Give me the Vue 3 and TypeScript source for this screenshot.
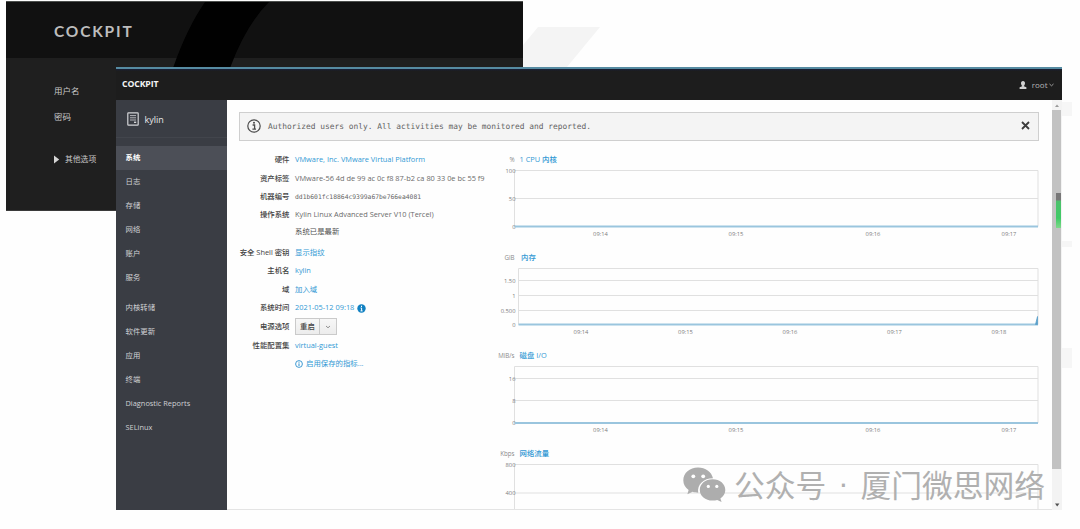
<script setup lang="ts">
interface Tick { y: number; label: string }
interface TimeTick { x: number; label: string }
interface Chart {
  unit: string
  title: string
  left: number
  bottom: number
  ticks: Tick[]
  times: TimeTick[]
  timeY: number
  baseline: boolean
  spike: boolean
}
interface Row { label: string; value: string; kind: string; height: number }

const wideTimes: TimeTick[] = [
  { x: 110.5, label: '09:14' },
  { x: 246, label: '09:15' },
  { x: 383, label: '09:16' },
  { x: 519, label: '09:17' },
]

const charts: Chart[] = [
  { unit: '%', title: '1 CPU 内核', left: 24.5, bottom: 57.5, ticks: [{ y: 1.5, label: '100' }, { y: 29.5, label: '50' }, { y: 57.5, label: '0' }], times: wideTimes, timeY: 67, baseline: true, spike: false },
  {
    unit: 'GiB', title: '内存', left: 28.5, bottom: 57.5,
    ticks: [{ y: 13.5, label: '1.50' }, { y: 28.5, label: '1' }, { y: 43.5, label: '0.500' }, { y: 57.5, label: '0' }],
    times: [{ x: 91, label: '09:14' }, { x: 195.5, label: '09:15' }, { x: 300, label: '09:16' }, { x: 404.5, label: '09:17' }, { x: 509, label: '09:18' }],
    timeY: 66.5, baseline: true, spike: true,
  },
  { unit: 'MiB/s', title: '磁盘 I/O', left: 24.5, bottom: 58, ticks: [{ y: 13.5, label: '16' }, { y: 35.5, label: '8' }, { y: 58, label: '0' }], times: wideTimes, timeY: 67, baseline: true, spike: false },
  { unit: 'Kbps', title: '网络流量', left: 24.5, bottom: 80, ticks: [{ y: 1.5, label: '800' }, { y: 30, label: '400' }], times: [], timeY: 67, baseline: false, spike: false },
]

const navTop = ['系统', '日志', '存储', '网络', '账户', '服务']
const navBottom = ['内核转储', '软件更新', '应用', '终端', 'Diagnostic Reports', 'SELinux']

const rows: Row[] = [
  { label: '硬件', value: 'VMware, Inc. VMware Virtual Platform', kind: 'link', height: 18 },
  { label: '资产标签', value: 'VMware-56 4d de 99 ac 0c f8 87-b2 ca 80 33 0e bc 55 f9', kind: 'text', height: 19 },
  { label: '机器编号', value: 'dd1b601fc18864c9399a67be766ea4081', kind: 'mono', height: 18 },
  { label: '操作系统', value: 'Kylin Linux Advanced Server V10 (Tercel)', kind: 'text', height: 18 },
  { label: '', value: '系统已是最新', kind: 'dark', height: 16 },
  { label: '安全 Shell 密钥', value: '显示指纹', kind: 'link', height: 25 },
  { label: '主机名', value: 'kylin', kind: 'link', height: 12 },
  { label: '域', value: '加入域', kind: 'link', height: 25 },
  { label: '系统时间', value: '2021-05-12 09:18', kind: 'time', height: 12 },
  { label: '电源选项', value: '重启', kind: 'button', height: 25 },
  { label: '性能配置集', value: 'virtual-guest', kind: 'link', height: 13 },
  { label: '', value: '启用保存的指标...', kind: 'metrics', height: 23 },
]
</script>

<template>
  <div class="stage">
    <svg class="backdrop" width="1080" height="529" viewBox="0 0 1080 529">
      <path d="M538 27H600L567 67H505Z" fill="#f4f4f4" />
      <path d="M1062 102h10v14h-10zM1062 241h10v6h-10zM1062 348h10v20h-10z" fill="#f6f6f6" />
    </svg>

    <section class="login">
      <header class="login-head">
        <svg class="band" width="516" height="66" viewBox="0 0 516 66">
          <path d="M199 0H263Q240 23 224 66H167Q181 26 199 0Z" fill="#010101" />
        </svg>
        <span class="login-logo">COCKPIT</span>
      </header>
      <div class="login-body">
        <span class="field user">用户名</span>
        <span class="field pass">密码</span>
        <span class="field more">
          <svg width="6" height="9" viewBox="0 0 6 9"><path d="M0 0.5L5.2 4.5L0 8.5Z" fill="#d5d5d5" /></svg>
          其他选项
        </span>
      </div>
    </section>

    <section class="window">
      <header class="topbar">
        <span class="brand">COCKPIT</span>
        <span class="account">
          <svg width="8" height="8" viewBox="0 0 8 8"><path d="M4 0C5.4 0 6 1 6 2.2C6 3.4 5.4 4.4 4.9 4.7V5.2L7.4 6.2V8H0.6V6.2L3.1 5.2V4.7C2.6 4.4 2 3.4 2 2.2C2 1 2.6 0 4 0Z" fill="#d0d0d0" /></svg>
          <span>root</span>
          <svg class="caret" width="5" height="4" viewBox="0 0 5 4"><path d="M0.5 1L2.5 2.8L4.5 1" fill="none" stroke="#aaa" stroke-width="0.9" /></svg>
        </span>
      </header>

      <div class="body">
        <nav class="sidebar">
          <div class="host">
            <svg width="12" height="14" viewBox="0 0 12 14">
              <rect x="0.8" y="0.8" width="10.4" height="12.4" rx="0.6" fill="none" stroke="#d2d3d6" stroke-width="1.2" />
              <path d="M3 3.6H9M3 5.8H9M3 8H9" stroke="#c2c3c7" stroke-width="0.9" />
              <path d="M7 10.3H9.2" stroke="#d2d3d6" stroke-width="1.4" />
            </svg>
            <span>kylin</span>
          </div>
          <ul class="nav">
            <li v-for="(item, i) in navTop" :key="item" :class="{ active: i === 0 }">{{ item }}</li>
          </ul>
          <ul class="nav second">
            <li v-for="item in navBottom" :key="item">{{ item }}</li>
          </ul>
        </nav>

        <main class="content">
          <div class="alert">
            <svg width="14" height="14" viewBox="0 0 14 14">
              <circle cx="7" cy="7" r="6.2" fill="none" stroke="#4b4b4b" stroke-width="1.2" />
              <path d="M5.6 6H7.6V10M5.4 10.2H9" fill="none" stroke="#4b4b4b" stroke-width="1.3" />
              <circle cx="7" cy="3.8" r="1" fill="#4b4b4b" />
            </svg>
            <span class="alert-text">Authorized users only. All activities may be monitored and reported.</span>
            <svg class="close" width="9" height="9" viewBox="0 0 9 9"><path d="M1 1L8 8M8 1L1 8" stroke="#3c3c3c" stroke-width="1.8" /></svg>
          </div>

          <div class="columns">
            <div class="info">
              <div v-for="row in rows" :key="row.value" class="row" :style="{ height: row.height + 'px' }">
                <span class="label">{{ row.label }}</span>
                <span v-if="row.kind === 'button'" class="button">
                  <span class="button-main">{{ row.value }}</span>
                  <span class="button-drop">
                    <svg width="6" height="4" viewBox="0 0 6 4"><path d="M1 1L3 2.8L5 1" fill="none" stroke="#777" stroke-width="0.8" /></svg>
                  </span>
                </span>
                <span v-else class="value" :class="row.kind">
                  <svg v-if="row.kind === 'metrics'" width="8" height="8" viewBox="0 0 8 8">
                    <circle cx="4" cy="4" r="3.4" fill="none" stroke="#2b8fce" stroke-width="0.9" />
                    <path d="M4 1.8V2.7M4 3.4V6" stroke="#2b8fce" stroke-width="1" />
                  </svg>
                  <span>{{ row.value }}</span>
                  <svg v-if="row.kind === 'time'" width="9" height="9" viewBox="0 0 9 9">
                    <circle cx="4.5" cy="4.5" r="4.2" fill="#1181c2" />
                    <path d="M4.5 1.7V3M3.6 4H4.6V6.8M3.5 6.9H5.6" fill="none" stroke="#fff" stroke-width="1" />
                  </svg>
                </span>
              </div>
            </div>

            <div class="charts">
              <div v-for="c in charts" :key="c.title" class="chart">
                <div class="chart-head">
                  <span class="unit">{{ c.unit }}</span>
                  <span class="chart-title" :class="{ inset: c.spike }">{{ c.title }}</span>
                </div>
                <svg class="plot" width="560" height="80" viewBox="0 0 560 80">
                  <path :d="`M${c.left} ${c.bottom}V1.5H548V${c.bottom}`" fill="none" stroke="#e0e0e0" stroke-width="1" />
                  <template v-for="t in c.ticks" :key="t.label">
                    <line :x1="c.left" :x2="548" :y1="t.y" :y2="t.y" stroke="#e0e0e0" stroke-width="1" />
                    <text x="25.5" :y="t.y + 2.1" text-anchor="end" class="tick">{{ t.label }}</text>
                  </template>
                  <line v-if="c.baseline" :x1="c.left" x2="548" :y1="c.bottom" :y2="c.bottom" stroke="#9ac5de" stroke-width="2" />
                  <path v-if="c.spike" d="M545.5 57.5L547.5 49.5V57.5Z" fill="#5a9fca" stroke="#5a9fca" stroke-width="0.8" />
                  <text v-for="t in c.times" :key="t.label" :x="t.x" :y="c.timeY" text-anchor="middle" class="tick">{{ t.label }}</text>
                </svg>
              </div>
            </div>
          </div>
        </main>

        <div class="scroll">
          <svg width="10" height="10" viewBox="0 0 10 10"><path d="M3 7L5 4.5L7 7Z" fill="#999" /></svg>
          <div class="thumb"></div>
          <div class="rest"></div>
          <svg width="10" height="10" viewBox="0 0 10 10"><path d="M3 3.5H7.4L5.2 6.4Z" fill="#505050" /></svg>
          <div class="meter"></div>
        </div>
      </div>
    </section>

    <div class="watermark">
      <svg width="43" height="36" viewBox="0 0 43 36">
        <path d="M15 0.5C6.6 0.5 0.3 6.2 0.3 13.2C0.3 17.2 2.3 20.6 5.6 23L4.4 27.2L9.6 24.8C11.4 25.4 13 25.7 15.2 25.7C14 17.5 20.5 11.2 30 11.2C28.5 4.8 22.5 0.5 15 0.5Z" fill="#adadad" />
        <path d="M29.6 12.3C22.3 12.3 16.8 17 16.8 23C16.8 29 22.3 33.6 29.6 33.6C31.2 33.6 32.8 33.3 34.2 32.9L38.6 35L37.4 31.4C40.4 29.4 42.3 26.4 42.3 23C42.3 17 36.8 12.3 29.6 12.3Z" fill="#adadad" />
        <g fill="#fff">
          <circle cx="10.3" cy="9.3" r="1.9" /><circle cx="20.2" cy="9.3" r="1.9" />
          <circle cx="25.3" cy="19.4" r="1.6" /><circle cx="33.8" cy="19.4" r="1.6" />
        </g>
      </svg>
      <span class="account-kind">公众号</span>
      <span class="dot">·</span>
      <span class="account-name">厦门微思网络</span>
    </div>
  </div>
</template>

<style>
html, body { margin: 0; background: #fefefe; overflow: hidden; }
</style>

<style scoped>
.stage {
  position: relative;
  width: 1080px;
  height: 529px;
  overflow: hidden;
  background: #fefefe;
  font-family: "Open Sans", "Noto Sans CJK SC", sans-serif;
  font-size: 7.4px;
  line-height: 1;
  white-space: nowrap;
}
.backdrop { position: absolute; left: 0; top: 0; }
svg { display: block; flex: none; }

.login {
  position: absolute;
  left: 6px;
  top: 1px;
  width: 516.5px;
  height: 209.5px;
  background: #1f1f1f;
  border-top: 1px solid #4c4f4d;
  box-sizing: border-box;
  border-bottom: 1px solid #3b3b3b;
}
.login-head {
  display: flex;
  align-items: center;
  height: 56px;
  padding-left: 48px;
  background: #111;
}
.band { position: absolute; left: 0; top: 0; }
.login-logo {
  position: relative;
  top: 2px;
  color: #bdbdbd;
  font-family: Lato, sans-serif;
  font-size: 15.5px;
  font-weight: 700;
  letter-spacing: 1.8px;
}
.login-body { display: flex; flex-direction: column; padding-left: 48px; color: #c9c9c9; }
.field { font-size: 8.5px; height: 10px; line-height: 10px; }
.user { margin-top: 28px; }
.pass { margin-top: 16px; }
.more { margin-top: 32px; display: flex; align-items: center; gap: 5px; font-size: 7.8px; }

.window {
  position: absolute;
  left: 116px;
  top: 67px;
  width: 946px;
  height: 443px;
  display: flex;
  flex-direction: column;
  background: #fefefe;
}
.topbar {
  flex: none;
  height: 33px;
  box-sizing: border-box;
  border-top: 2px solid #568ba2;
  background: linear-gradient(#18203a 0, #1d1d1d 2px);
  display: flex;
  align-items: center;
  justify-content: space-between;
  padding: 0 8px 0 6px;
}
.brand { color: #f4f4f4; font-size: 8.7px; font-weight: 700; letter-spacing: -0.1px; }
.account { display: flex; align-items: center; color: #b5b5b5; font-size: 8px; }
.account span { margin: 0 1.5px 0 5px; }
.body { flex: 1; display: flex; min-height: 0; }

.sidebar { width: 110.5px; flex: none; background: #3a3d44; color: #d0d1d4; }
.host {
  height: 38px;
  padding: 1px 0 0 11px;
  box-sizing: border-box;
  display: flex;
  align-items: center;
  gap: 5.5px;
  font-size: 9px;
  color: #e8e8ea;
  border-bottom: 1px solid #42454c;
}
.nav { list-style: none; margin: 8px 0 0; padding: 0; }
.nav.second { margin-top: 6.5px; }
.nav li { height: 23.95px; display: flex; align-items: center; padding-left: 9.5px; }
.nav li.active { background: #4c4f57; color: #fff; font-weight: 700; }

.content { flex: 1; min-width: 0; overflow: hidden; border-bottom: 1px solid #e4e4e4; }
.alert {
  margin: 12px 0 0 12.5px;
  width: 800px;
  height: 29px;
  box-sizing: border-box;
  border: 1px solid #cfcfcf;
  background: #f4f4f4;
  display: flex;
  align-items: center;
  padding: 0 8px 2px 7px;
}
.alert-text {
  margin: 3px 0 0 7px;
  font-family: "DejaVu Sans Mono", monospace;
  font-size: 7.9px;
  color: #626262;
}
.close { margin-left: auto; }
.columns { display: flex; margin-top: 10px; }
.info { width: 263.5px; flex: none; color: #6b6b6b; }
.row { display: flex; align-items: center; }
.label { width: 63px; text-align: right; color: #444; font-weight: 500; margin-right: 5.5px; }
.value { display: flex; align-items: center; gap: 3px; }
.link, .time, .metrics { color: #3299d4; }
.dark { color: #505050; }
.mono { font-family: "DejaVu Sans Mono", monospace; font-size: 6.35px; color: #666; }
.button {
  display: flex;
  width: 42px;
  height: 17px;
  box-sizing: border-box;
  border: 1px solid #cacaca;
  background: linear-gradient(#f7f7f7, #ececec);
  color: #444;
}
.button-main { width: 23px; display: flex; align-items: center; justify-content: center; border-right: 1px solid #cacaca; font-weight: 500; }
.button-drop { flex: 1; display: flex; align-items: center; justify-content: center; }

.charts { width: 560px; flex: none; }
.chart { height: 98px; }
.chart-head { height: 18px; display: flex; align-items: center; }
.plot { overflow: visible; }
.unit { width: 24.5px; text-align: right; font-size: 6.2px; color: #8a8a8a; margin-right: 5px; }
.chart-title { color: #3299d4; font-weight: 500; }
.chart-title.inset { margin-left: 1.5px; }
.tick { font-size: 5.8px; fill: #7c7c7c; }

.scroll { position: relative; width: 10px; flex: none; background: #f3f3f3; display: flex; flex-direction: column; }
.thumb { height: 359px; width: 9px; background: #c2c2c2; }
.rest { flex: 1; }
.meter {
  position: absolute;
  left: 3.5px;
  top: 93px;
  width: 5px;
  height: 35px;
  background: linear-gradient(#777 0, #777 7px, #4dc16c 8px, #3fca66 25px, #7ed98a 35px);
}

.watermark {
  position: absolute;
  left: 683px;
  top: 467px;
  display: flex;
  align-items: center;
  color: #b0b0b0;
  font-family: "Noto Sans CJK SC", sans-serif;
  font-size: 30.8px;
  font-weight: 400;
}
.account-kind, .account-name, .dot { position: relative; top: -1px; }
.account-kind { margin-left: 8px; }
.dot { width: 34px; text-align: center; font-family: "Liberation Sans", sans-serif; }
</style>
